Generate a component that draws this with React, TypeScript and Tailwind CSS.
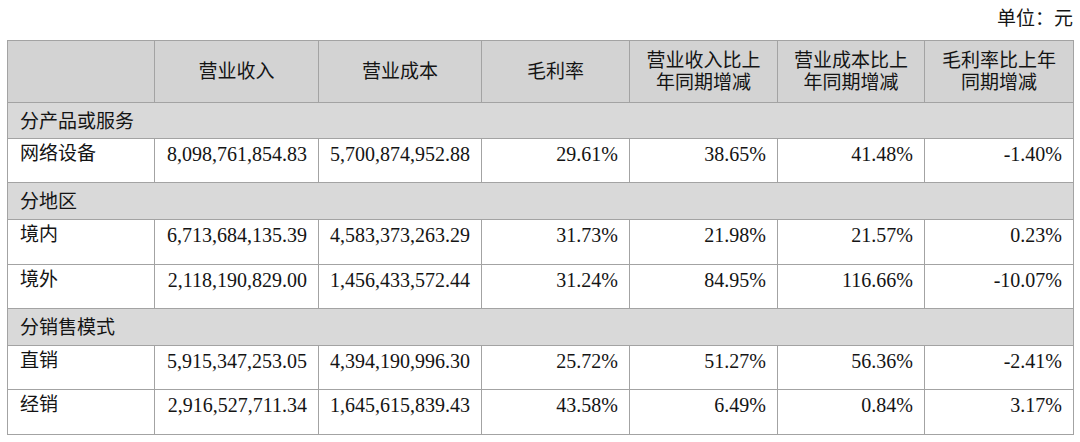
const headers: React.ReactNode[] = [
  "",
  "营业收入",
  "营业成本",
  "毛利率",
  <>营业收入比上<br />年同期增减</>,
  <>营业成本比上<br />年同期增减</>,
  <>毛利率比上年<br />同期增减</>,
];

type Row = { section?: string; label?: string; values?: string[]; h: string };

const rows: Row[] = [
  { section: "分产品或服务", h: "h-[36px]" },
  {
    label: "网络设备",
    values: ["8,098,761,854.83", "5,700,874,952.88", "29.61%", "38.65%", "41.48%", "-1.40%"],
    h: "h-[44px]",
  },
  { section: "分地区", h: "h-[37px]" },
  {
    label: "境内",
    values: ["6,713,684,135.39", "4,583,373,263.29", "31.73%", "21.98%", "21.57%", "0.23%"],
    h: "h-[45px]",
  },
  {
    label: "境外",
    values: ["2,118,190,829.00", "1,456,433,572.44", "31.24%", "84.95%", "116.66%", "-10.07%"],
    h: "h-[44px]",
  },
  { section: "分销售模式", h: "h-[37px]" },
  {
    label: "直销",
    values: ["5,915,347,253.05", "4,394,190,996.30", "25.72%", "51.27%", "56.36%", "-2.41%"],
    h: "h-[44px]",
  },
  {
    label: "经销",
    values: ["2,916,527,711.34", "1,645,615,839.43", "43.58%", "6.49%", "0.84%", "3.17%"],
    h: "h-[45px]",
  },
];

const widths = ["w-[147px]", "w-[164px]", "w-[163px]", "w-[148px]", "w-[148px]", "w-[147px]", "w-[149px]"];

const cjk = "font-['Liberation_Serif','Noto_Sans_CJK_SC',serif]";

export default function App() {
  return (
    <div className={`w-[1080px] h-[442px] bg-white text-[#141414] ${cjk}`}>
      <div className="flex justify-end pr-[7px] pt-[6px] h-[40px] text-[19px] leading-[26px]">
        单位：元
      </div>
      <table className="ml-[7px] w-[1066px] table-fixed border-collapse">
        <colgroup>
          {widths.map((w, i) => (
            <col key={i} className={w} />
          ))}
        </colgroup>
        <thead>
          <tr className="h-[62px] bg-[#d3d3d3]">
            {headers.map((h, i) => (
              <th
                key={i}
                className="border border-[#a3a3a3] text-center align-middle font-normal text-[19px] leading-[22px] p-0"
              >
                {h}
              </th>
            ))}
          </tr>
        </thead>
        <tbody>
          {rows.map((r, i) =>
            r.section ? (
              <tr key={i} className={`${r.h} bg-[#d9d9d9]`}>
                <td
                  colSpan={7}
                  className="border border-[#a3a3a3] pl-[12px] pt-[2px] align-middle text-[19px] leading-[22px]"
                >
                  {r.section}
                </td>
              </tr>
            ) : (
              <tr key={i} className={r.h}>
                <td className="border border-[#a3a3a3] pl-[12px] pt-[4px] align-top text-[19px] leading-[22px]">
                  {r.label}
                </td>
                {r.values!.map((v, j) => (
                  <td
                    key={j}
                    className="border border-[#a3a3a3] pr-[11px] pt-[4px] align-top text-right text-[20px] leading-[22px] whitespace-nowrap"
                  >
                    {v}
                  </td>
                ))}
              </tr>
            )
          )}
        </tbody>
      </table>
    </div>
  );
}
